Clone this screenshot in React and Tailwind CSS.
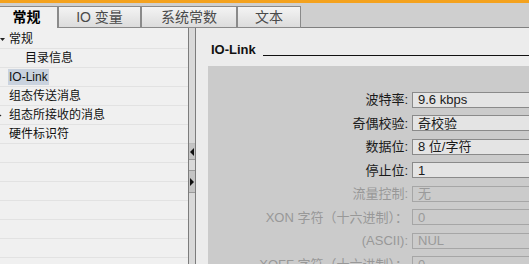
import React from 'react'

const tabs = [
  { label: '常规', w: 'w-[58px]', active: true },
  { label: 'IO 变量', w: 'w-[83px]' },
  { label: '系统常数', w: 'w-[96px]' },
  { label: '文本', w: 'w-[64px]' },
]

const treeItems = [
  { label: '常规', indent: 'pl-[9px]', arrow: 'down' },
  { label: '目录信息', indent: 'pl-[25px]' },
  { label: 'IO-Link', indent: 'pl-[8px]', selected: true },
  { label: '组态传送消息', indent: 'pl-[9px]' },
  { label: '组态所接收的消息', indent: 'pl-[9px]', arrow: 'right' },
  { label: '硬件标识符', indent: 'pl-[9px]' },
  {}, {}, {}, {}, {}, {},
]

const fields = [
  { label: '波特率:', value: '9.6 kbps' },
  { label: '奇偶校验:', value: '奇校验' },
  { label: '数据位:', value: '8 位/字符' },
  { label: '停止位:', value: '1' },
  { label: '流量控制:', value: '无', disabled: true },
  { label: 'XON 字符（十六进制）：', value: '0', disabled: true },
  { label: '(ASCII):', value: 'NUL', disabled: true },
  { label: 'XOFF 字符（十六进制）：', value: '0', disabled: true },
]

const font = { fontFamily: '"Liberation Sans", "Noto Sans CJK SC", sans-serif' }

const TreeArrow = ({ dir }) => (
  <svg width="5" height="5" viewBox="0 0 5 5" className="absolute left-0 top-[7px]">
    {dir === 'down' ? (
      <polygon points="0,1 5,1 2.5,4" fill="#222" />
    ) : (
      <polygon points="-2,0 1.5,2.5 -2,5" fill="#222" />
    )}
  </svg>
)

const App = () => {
  return (
    <div className="w-[529px] h-[264px] overflow-hidden flex flex-col bg-[#ececec]" style={font}>
      {/* orange top bar */}
      <div className="h-[3px] bg-[#f4a21e] shrink-0" />

      {/* tab strip */}
      <div className="h-[25px] shrink-0 bg-[#cfcfcf] border-b border-[#7f7f7f] flex items-end">
        {tabs.map((tab) => (
          <div
            key={tab.label}
            className={`${tab.w} h-[22px] -mb-px flex items-center justify-center text-[14px] border-r border-l border-t border-[#8a8a8a] ${
              tab.active
                ? 'bg-[#f0f0f0] border-l-0 border-b-0 font-bold text-black pr-[4px]'
                : 'bg-gradient-to-b from-[#f4f4f4] to-[#dcdcdc] text-[#4a4a4a] border-b'
            }`}
          >
            {tab.label}
          </div>
        ))}
      </div>

      <div className="flex flex-1 min-h-0">
        {/* left tree */}
        <div className="w-[188px] shrink-0 bg-[#f0f0f0] pt-[2px] text-[12px] text-[#111] overflow-hidden">
          {treeItems.map((item, i) => (
            <div key={i} className="relative h-[19px] border-b border-[#e2e2e2] flex items-center">
              {item.arrow && <TreeArrow dir={item.arrow} />}
              {item.label && (
                <div className={item.indent}>
                  <span className={item.selected ? 'bg-[#c9d2de] px-[1px] py-[1px]' : ''}>{item.label}</span>
                </div>
              )}
            </div>
          ))}
        </div>

        {/* splitter */}
        <div className="w-[8px] shrink-0 border-l border-r border-[#7c7c7c] bg-[#d9d9d9] flex flex-col">
          <div className="h-[116px] border-b border-[#bdbdbd]" />
          <div className="h-[16px] bg-[#c4c4c4] border-b border-[#9a9a9a] flex items-center">
            <svg width="6" height="8" viewBox="0 0 6 8"><polygon points="5,0 5,8 1,4" fill="#111" /></svg>
          </div>
          <div className="h-[10px]" />
          <div className="h-[23px] bg-[#c4c4c4] border-t border-b border-[#9a9a9a] flex items-center">
            <svg width="6" height="8" viewBox="0 0 6 8"><polygon points="1,0 1,8 5,4" fill="#111" /></svg>
          </div>
        </div>

        {/* right content */}
        <div className="flex-1 min-w-0 bg-[#ececec] pl-[12px] flex flex-col overflow-hidden">
          <div className="h-[38px] shrink-0 flex items-end pl-[3px] pb-[7px]">
            <span className="text-[13px] leading-[18px] font-bold text-[#111]">IO-Link</span>
            <div className="flex-1 h-px bg-[#111] ml-[7px] mb-[3px]" />
          </div>
          <div className="flex-1 bg-[#cbcbcb] pt-[22px] text-[13px]">
            {fields.map((f) => (
              <div key={f.label} className="h-[23.5px] flex items-center">
                <div className={`w-[200px] shrink-0 text-right whitespace-nowrap ${f.disabled ? 'text-[#989898]' : 'text-[#1a1a1a]'}`}>
                  {f.label}
                </div>
                <div
                  className={`ml-[4px] w-[140px] shrink-0 h-[16px] flex items-center pl-[5px] border ${
                    f.disabled
                      ? 'bg-[#cbcbcb] border-[#a6a6a6] text-[#9a9a9a]'
                      : 'bg-[#e4e4e4] border-[#8a8a8a] text-[#1a1a1a]'
                  }`}
                >
                  {f.value}
                </div>
              </div>
            ))}
          </div>
        </div>
      </div>
    </div>
  )
}

export default App
